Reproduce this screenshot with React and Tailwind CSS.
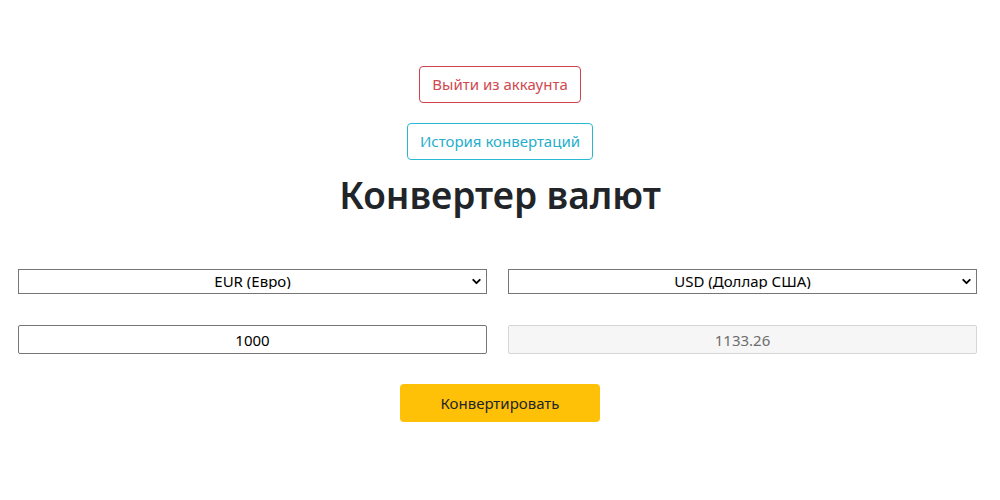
import { ChevronDown } from "lucide-react";

const CurrencySelect = ({ value, options }) => (
  <div className="relative w-[469px]">
    <select
      defaultValue={value}
      className="appearance-none w-full h-[25px] border border-[#767676] bg-white text-[15px] text-black text-center [text-align-last:center] leading-none outline-none"
    >
      {options.map((o) => (
        <option key={o}>{o}</option>
      ))}
    </select>
    <ChevronDown
      size={13}
      strokeWidth={3.5}
      className="absolute right-[4px] top-[6px] text-black pointer-events-none"
    />
  </div>
);

export default function App() {
  const currencies = ["EUR (Евро)", "USD (Доллар США)", "RUB (Российский рубль)"];

  return (
    <div className="min-h-[500px] bg-white font-['Noto_Sans','Segoe_UI',sans-serif] text-[#212529]">
      <div className="flex flex-col items-center pt-[66px]">
        {/* Account actions */}
        <button className="h-[37px] px-[12px] border border-[#d0434c] rounded-[4px] text-[15px] text-[#cf4a51] bg-white">
          Выйти из аккаунта
        </button>
        <button className="mt-[20px] h-[37px] px-[12px] border border-[#2bb8d2] rounded-[4px] text-[15px] text-[#26aecb] bg-white">
          История конвертаций
        </button>

        <h1 className="mt-[13px] text-[37px] font-semibold leading-[1.2] text-[#212529]">
          Конвертер валют
        </h1>
      </div>

      {/* Selects */}
      <div className="flex gap-[21px] pl-[18px] mt-[52px]">
        <CurrencySelect value="EUR (Евро)" options={currencies} />
        <CurrencySelect value="USD (Доллар США)" options={currencies} />
      </div>

      {/* Amounts */}
      <div className="flex gap-[21px] pl-[18px] mt-[31px]">
        <input
          defaultValue="1000"
          className="w-[469px] h-[29px] border border-[#767676] rounded-[2px] text-[15px] text-black text-center outline-none"
        />
        <input
          value="1133.26"
          readOnly
          disabled
          className="w-[469px] h-[29px] border border-[#d6d6d6] rounded-[2px] bg-[#f6f6f6] text-[15px] text-[#6d6d6d] text-center"
        />
      </div>

      <div className="flex justify-center mt-[30px]">
        <button className="w-[200px] h-[38px] bg-[#ffc107] rounded-[4px] text-[15px] text-[#212529]">
          Конвертировать
        </button>
      </div>
    </div>
  );
}
